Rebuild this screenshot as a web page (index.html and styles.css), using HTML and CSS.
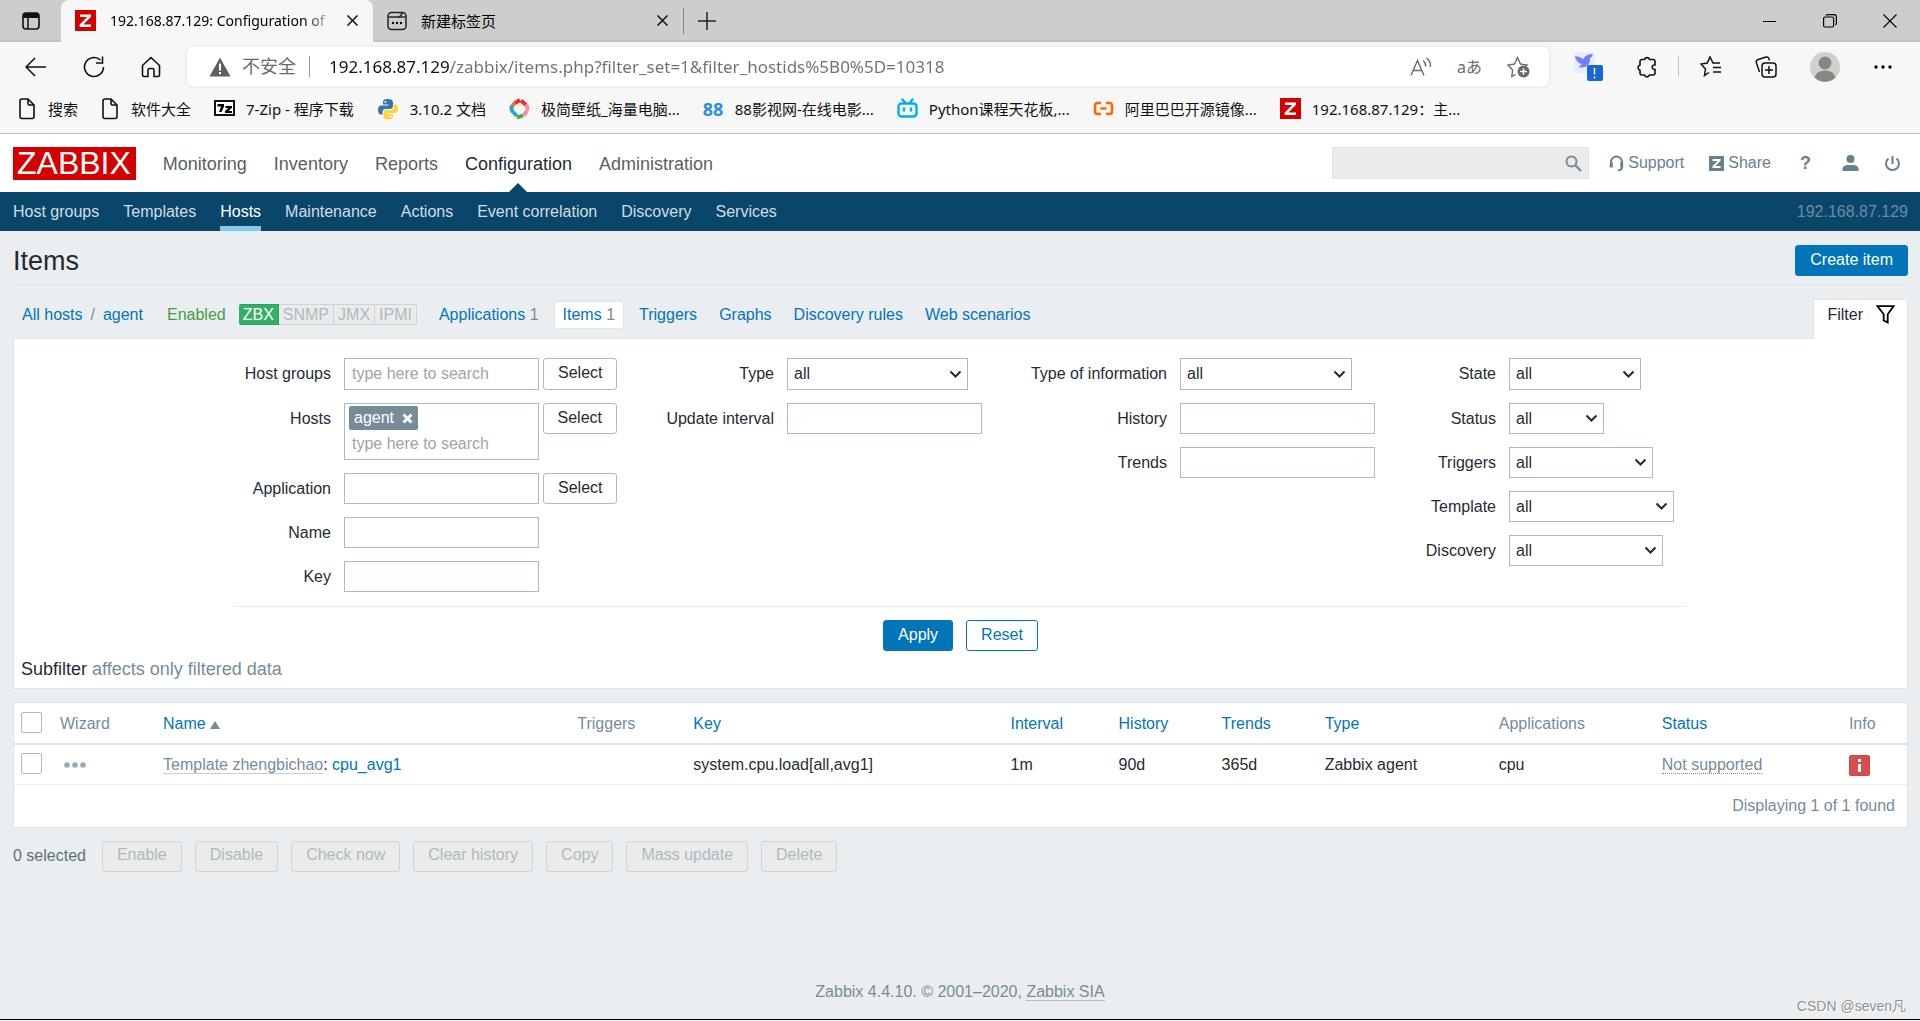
FILE: index.html
```html
<!DOCTYPE html>
<html lang="en">
<head>
<meta charset="utf-8">
<meta name="viewport" content="width=device-width, initial-scale=1">
<title>192.168.87.129: Configuration of items</title>
<link rel="stylesheet" href="styles.css">
</head>
<body>
<header class="browser">
  <div class="tabstrip">
    <button class="tab-actions" aria-label="Tab actions"><svg width="18" height="18" viewBox="0 0 18 18"><rect x="1" y="1" width="16" height="16" rx="3" fill="none" stroke="#111" stroke-width="1.6"/><path d="M1 4a3 3 0 0 1 3-3h10a3 3 0 0 1 3 3v2H1z" fill="#111"/><path d="M6 5v12" stroke="#111" stroke-width="1.5"/></svg></button>
    <div class="tab tab-active">
      <svg width="21" height="21" viewBox="0 0 21 21"><rect width="21" height="21" fill="#d40000"/><path d="M5 4.500h11v2.300l-7.600 7.700H16V17H4.700v-2.400l7.500-7.600H5z" fill="#fff"/></svg>
      <span class="tab-title">192.168.87.129: Configuration of</span>
      <button class="tab-close" aria-label="Close tab"><svg width="11" height="11" viewBox="0 0 11 11"><path d="M.5.500l10 10M10.500.500l-10 10" stroke="#111" stroke-width="1.500"/></svg></button>
    </div>
    <div class="tab tab-idle">
      <svg width="20" height="20" viewBox="0 0 20 20"><rect x="1" y="1.500" width="18" height="17" rx="3.500" fill="none" stroke="#222" stroke-width="1.500"/><path d="M1.500 6h11l3-4" fill="none" stroke="#222" stroke-width="1.400"/><path d="M12 6h6.500" stroke="#222" stroke-width="1.400"/><circle cx="6" cy="12" r="1.200"/><circle cx="10" cy="12" r="1.200"/><circle cx="14" cy="12" r="1.200"/></svg>
      <span class="tab-title">新建标签页</span>
      <button class="tab-close" aria-label="Close tab"><svg width="11" height="11" viewBox="0 0 11 11"><path d="M.5.500l10 10M10.500.500l-10 10" stroke="#111" stroke-width="1.500"/></svg></button>
    </div>
    <button class="new-tab" aria-label="New tab"><svg width="18" height="18" viewBox="0 0 18 18"><path d="M9 0v18M0 9h18" stroke="#222" stroke-width="1.500"/></svg></button>
    <div class="window-controls">
      <button aria-label="Minimize"><svg width="14" height="14" viewBox="0 0 14 14"><path d="M0 7.500h13" stroke="#000"/></svg></button>
      <button aria-label="Restore"><svg width="14" height="14" viewBox="0 0 14 14" fill="none" stroke="#000" stroke-width="1.200"><rect x=".6" y="3" width="10" height="10" rx="1.500"/><path d="M3 1.500Q3.500.600 5 .600h6Q13.400.600 13.400 3v6q0 1.500-1 2"/></svg></button>
      <button aria-label="Close"><svg width="14" height="14" viewBox="0 0 14 14"><path d="M.5.500l13 13M13.500.500l-13 13" stroke="#000" stroke-width="1.100"/></svg></button>
    </div>
  </div>
  <div class="toolbar">
    <div class="nav-buttons">
      <button aria-label="Back"><svg width="22" height="20" viewBox="0 0 22 20" fill="none" stroke="#111" stroke-width="1.500"><path d="M21 10H1M10 1l-9 9 9 9"/></svg></button>
      <button aria-label="Refresh"><svg width="22" height="22" viewBox="0 0 22 22" fill="none" stroke="#111" stroke-width="1.600"><path d="M20.500 11a9.500 9.500 0 1 1-3.200-7.100M19.500.500V7h-6.500"/></svg></button>
      <button aria-label="Home"><svg width="20" height="22" viewBox="0 0 20 22" fill="none" stroke="#111" stroke-width="1.600"><path d="M1.500 9.500L10 1.500l8.500 8V19a1.500 1.500 0 0 1-1.500 1.500h-4V14a1.500 1.500 0 0 0-1.500-1.500h-3A1.500 1.500 0 0 0 7 14v6.500H3A1.500 1.500 0 0 1 1.500 19z"/></svg></button>
    </div>
    <div class="address">
      <svg width="22" height="20" viewBox="0 0 22 20"><path d="M11 .500L21.500 19.500H.5z" fill="#5f5f5f"/><path d="M11 6.500v7M11 15v2.200" stroke="#fff" stroke-width="2"/></svg>
      <label class="insecure" for="url">不安全</label>
      <input id="url" class="url" type="text" value="192.168.87.129/zabbix/items.php?filter_set=1&amp;filter_hostids%5B0%5D=10318">
      <button aria-label="Read aloud"><svg width="22" height="20" viewBox="0 0 22 20" fill="none" stroke="#6b6b6b" stroke-width="1.400"><path d="M1 18.500L7.500 3.500 14 18.500M3.300 13.500h8.400M13 3.500q3 2.500 2.800 6M16.500 1q4.500 3.500 4 9"/></svg></button>
      <button class="translate" aria-label="Translate">aあ</button>
      <button aria-label="Add to favorites"><svg width="23" height="22" viewBox="0 0 23 22"><path d="M8.500 18.500l-3.700 2 .8-6.500L1 9l6.500-1L10.500 1.500l3 6.500 6.500 1-2 2" fill="none" stroke="#6b6b6b" stroke-width="1.400"/><circle cx="16.500" cy="15.500" r="6" fill="#6b6b6b"/><path d="M16.500 12.200v6.600M13.200 15.500h6.600" stroke="#fff" stroke-width="1.400"/></svg></button>
    </div>
    <div class="tools">
      <button aria-label="Bird extension"><svg width="29" height="29" viewBox="0 0 29 29"><rect x="0" y="0" width="21" height="21" rx="3" fill="#e9edff"/><path d="M1 4q5 .500 8 3 3-5 10-5-1 3-3 4 .500 9-8 9.500l-4-.500q3-1 3.500-3Q2 10.500 1 4z" fill="#6f80f7"/><rect x="13" y="13" width="16" height="16" rx="2" fill="#1967d2"/><path d="M20.500 16v6.500M20.500 24.500v2" stroke="#fff" stroke-width="1.500"/></svg></button>
      <button aria-label="Extensions"><svg width="21" height="22" viewBox="0 0 21 22" fill="none" stroke="#111" stroke-width="1.600"><path d="M6 3.500h2.500a2.600 2.600 0 0 1 5 0H17a2 2 0 0 1 2 2V9h-1a2.300 2.300 0 0 0 0 4.500h1V17a2 2 0 0 1-2 2h-3.500a2.600 2.600 0 0 1-5 0H6a2 2 0 0 1-2-2v-2.800a2.700 2.700 0 0 1 0-5.200V5.500a2 2 0 0 1 2-2z"/></svg></button>
      <span class="tool-sep"></span>
      <button aria-label="Favorites"><svg width="22" height="21" viewBox="0 0 22 21" fill="none" stroke="#111" stroke-width="1.500"><path d="M9 16.500L4.500 19.500 5.500 13 1 8l6.300-1L10 1l3 6h7M13 11.500h8M13 16h8"/></svg></button>
      <button aria-label="Collections"><svg width="22" height="22" viewBox="0 0 22 22" fill="none" stroke="#111" stroke-width="1.500"><rect x="7" y="7" width="14" height="14" rx="3"/><path d="M14 10v8M10 14h8M4.500 16L1.300 6.500Q.8 4.500 2.600 3.700L11 1q2-.500 2.700 1.200L14.500 4.500"/></svg></button>
      <button aria-label="Profile"><svg width="30" height="30" viewBox="0 0 30 30"><circle cx="15" cy="15" r="15" fill="#d2d0cd"/><circle cx="15" cy="11" r="6.500" fill="#8a8683"/><path d="M4.500 25.500q2-7 10.500-7t10.500 7A15 15 0 0 1 4.500 25.500z" fill="#8a8683"/></svg></button>
      <button aria-label="Settings and more"><svg width="20" height="6" viewBox="0 0 20 6"><circle cx="3" cy="3" r="1.700"/><circle cx="10" cy="3" r="1.700"/><circle cx="17" cy="3" r="1.700"/></svg></button>
    </div>
  </div>
  <nav class="bookmarks" aria-label="Bookmarks">
    <a href="#"><svg width="19" height="22" viewBox="0 0 19 22" fill="none" stroke="#111" stroke-width="1.600"><path d="M4 1h6l6 6v11.500a2 2 0 0 1-2 2H4a2 2 0 0 1-2-2V3a2 2 0 0 1 2-2zM10 1v4.500A1.500 1.500 0 0 0 11.500 7H16"/></svg>搜索</a>
    <a href="#"><svg width="19" height="22" viewBox="0 0 19 22" fill="none" stroke="#111" stroke-width="1.600"><path d="M4 1h6l6 6v11.500a2 2 0 0 1-2 2H4a2 2 0 0 1-2-2V3a2 2 0 0 1 2-2zM10 1v4.500A1.500 1.500 0 0 0 11.500 7H16"/></svg>软件大全</a>
    <a href="#"><svg width="21" height="21" viewBox="0 0 21 21"><rect x="1" y="3" width="19" height="14" fill="#fff" stroke="#111" stroke-width="2"/><path d="M3.500 6h6.500v2.500L7.500 14H5l2-5.500H3.500zM11.500 8H18v1.800L14.500 13H18v2h-7v-2l3.300-3h-2.800z"/></svg>7-Zip - 程序下载</a>
    <a href="#"><svg width="22" height="22" viewBox="0 0 22 22"><path d="M11 1C7 1 6 2.500 6 4.500V6.500h5.500v1H4C2 7.500 1 9.500 1 12s1 4.500 3 4.500h1.500V14c0-2 1.500-3 3-3H13c1.800 0 3-1.200 3-3V4.500C16 2 14 1 11 1z" fill="#3775a9"/><path d="M11 21.500c4 0 5-1.500 5-3.500v-2h-5.500v-1H18c2 0 3-2 3-4.500S20 6.500 18 6.500h-1V9c0 2-1.500 3-3 3H9.500c-1.800 0-3 1.200-3 3v3c0 2.500 1.500 3.500 4.500 3.500z" fill="#ffd43b"/><circle cx="8.500" cy="4" r="1" fill="#fff"/><circle cx="13.500" cy="18.500" r="1" fill="#fff"/></svg>3.10.2 文档</a>
    <a href="#"><svg width="21" height="22" viewBox="0 0 21 22" fill="none" stroke-width="3.800"><path d="M2.500 9L6 4.500" stroke="#ee7724"/><path d="M6 5l5-3" stroke="#e62f2f"/><path d="M12 2.500l5 4.500" stroke="#e62f2f"/><path d="M17.500 6.500l1.500 6" stroke="#f58aa0"/><path d="M18.500 12.500l-4 5" stroke="#f58aa0"/><path d="M14 17.500l-6 2" stroke="#55a630"/><path d="M8 18l-4-4" stroke="#20a7d8"/><path d="M3.500 14.500L2 8" stroke="#20a7d8"/></svg>极简壁纸_海量电脑...</a>
    <a href="#"><b class="mark-88">88</b>88影视网-在线电影...</a>
    <a href="#"><svg width="21" height="21" viewBox="0 0 21 21" fill="none" stroke="#00aeec" stroke-width="2.400" stroke-linecap="round"><rect x="1.500" y="5.500" width="18" height="13" rx="3"/><path d="M5.500 1.500l2.500 3M15.500 1.500l-2.500 3M7 10.500v2M14 10.500v2"/></svg>Python课程天花板,...</a>
    <a href="#"><svg width="21" height="21" viewBox="0 0 21 21" fill="none" stroke="#ff6a00" stroke-width="2.600"><path d="M8 5H4.500Q2 5 2 7.500v6Q2 16 4.500 16H8M13 5h3.500Q19 5 19 7.500v6Q19 16 16.500 16H13M7.500 10.500h6"/></svg>阿里巴巴开源镜像...</a>
    <a href="#"><svg width="21" height="21" viewBox="0 0 21 21"><rect width="21" height="21" fill="#d40000"/><path d="M5 4.500h11v2.300l-7.600 7.700H16V17H4.700v-2.400l7.500-7.600H5z" fill="#fff"/></svg>192.168.87.129：主...</a>
  </nav>
</header>

<header class="top">
  <a class="logo" href="#">ZABBIX</a>
  <nav class="main-nav" aria-label="Main">
    <a href="#">Monitoring</a>
    <a href="#">Inventory</a>
    <a href="#">Reports</a>
    <a href="#" class="selected">Configuration</a>
    <a href="#">Administration</a>
  </nav>
  <form class="search">
    <input type="text" aria-label="Search">
    <button type="button" aria-label="Search"><svg width="17" height="17" viewBox="0 0 17 17" fill="none" stroke="#768d99"><circle cx="6.500" cy="6.500" r="5" stroke-width="2"/><path d="M10.500 10.500l5.500 5.500" stroke-width="2.400"/></svg></button>
  </form>
  <div class="user-nav">
    <a href="#"><svg width="15" height="17" viewBox="0 0 15 17" fill="none" stroke="#69808d" stroke-width="2"><path d="M2 11V7a5.500 5.500 0 0 1 11 0v5q0 3-4 3.500"/><path d="M2.300 7.500v5M12.700 7.500v5" stroke-width="3"/></svg>Support</a>
    <a href="#"><svg width="15" height="15" viewBox="0 0 15 15"><rect width="15" height="15" fill="#69808d"/><path d="M3.500 3h8v1.800L6.500 10H11.500v2h-8v-1.800l5-5.200h-5z" fill="#fff"/></svg>Share</a>
    <a href="#" class="help" aria-label="Help">?</a>
    <a href="#" aria-label="User profile"><svg width="17" height="16" viewBox="0 0 17 16" fill="#69808d"><circle cx="8.500" cy="4" r="4"/><path d="M.5 16v-2.500Q1 10 6 10h5q5 0 5.500 3.500V16z"/></svg></a>
    <a href="#" aria-label="Sign out"><svg width="17" height="17" viewBox="0 0 17 17" fill="none" stroke="#69808d" stroke-width="2"><path d="M4.500 3.500a6.500 6.500 0 1 0 8 0M8.500 1v8"/></svg></a>
  </div>
</header>
<nav class="sub-nav" aria-label="Configuration">
  <a href="#">Host groups</a>
  <a href="#">Templates</a>
  <a href="#" class="selected">Hosts</a>
  <a href="#">Maintenance</a>
  <a href="#">Actions</a>
  <a href="#">Event correlation</a>
  <a href="#">Discovery</a>
  <a href="#">Services</a>
  <span class="server-name">192.168.87.129</span>
</nav>

<main>
  <div class="title-row">
    <h1>Items</h1>
    <button class="btn primary">Create item</button>
  </div>

  <div class="object-row">
    <nav class="crumbs" aria-label="Host">
      <a href="#">All hosts</a><span class="slash">/</span><a href="#">agent</a>
      <span class="enabled">Enabled</span>
      <span class="availability"><span class="on">ZBX</span><span>SNMP</span><span>JMX</span><span>IPMI</span></span>
      <span class="object"><a href="#">Applications</a> 1</span>
      <span class="object current"><a href="#">Items</a> 1</span>
      <a class="object" href="#">Triggers</a>
      <a class="object" href="#">Graphs</a>
      <a class="object" href="#">Discovery rules</a>
      <a class="object" href="#">Web scenarios</a>
    </nav>
    <a class="filter-tab" href="#">Filter<svg width="19" height="19" viewBox="0 0 19 19" fill="none" stroke="#000" stroke-width="1.800"><path d="M1.500 1.200h16l-5.800 8v8.300l-4-2V9.200z"/></svg></a>
  </div>

  <form class="panel filter">
    <div class="filter-body">
      <div class="fields fields-host">
        <label for="groups">Host groups</label><div class="field"><input id="groups" type="text" placeholder="type here to search"><button type="button" class="btn plain">Select</button></div>
        <label for="hosts">Hosts</label><div class="field"><div class="multiselect"><span class="tag">agent<button type="button" aria-label="Remove agent"><svg width="11" height="11" viewBox="0 0 11 11"><path d="M1.500 1.500l8 8M9.500 1.500l-8 8" stroke="#fff" stroke-width="3"/></svg></button></span><input id="hosts" type="text" placeholder="type here to search"></div><button type="button" class="btn plain">Select</button></div>
        <label for="app">Application</label><div class="field"><input id="app" type="text"><button type="button" class="btn plain">Select</button></div>
        <label for="name">Name</label><div class="field"><input id="name" type="text"></div>
        <label for="key">Key</label><div class="field"><input id="key" type="text"></div>
      </div>
      <div class="fields fields-type">
        <label for="type">Type</label><div class="field"><select id="type" class="w-type"><option>all</option></select></div>
        <label for="interval">Update interval</label><div class="field"><input id="interval" type="text"></div>
      </div>
      <div class="fields fields-info">
        <label for="info">Type of information</label><div class="field"><select id="info" class="w-info"><option>all</option></select></div>
        <label for="history">History</label><div class="field"><input id="history" type="text"></div>
        <label for="trends">Trends</label><div class="field"><input id="trends" type="text"></div>
      </div>
      <div class="fields fields-state">
        <label for="state">State</label><div class="field"><select id="state" class="w-state"><option>all</option></select></div>
        <label for="status">Status</label><div class="field"><select id="status" class="w-status"><option>all</option></select></div>
        <label for="triggers">Triggers</label><div class="field"><select id="triggers" class="w-triggers"><option>all</option></select></div>
        <label for="template">Template</label><div class="field"><select id="template" class="w-template"><option>all</option></select></div>
        <label for="discovery">Discovery</label><div class="field"><select id="discovery" class="w-discovery"><option>all</option></select></div>
      </div>
    </div>
    <div class="filter-actions">
      <button type="button" class="btn primary">Apply</button>
      <button type="button" class="btn outline">Reset</button>
    </div>
    <p class="subfilter">Subfilter <span>affects only filtered data</span></p>
  </form>

  <div class="panel list">
    <table>
      <colgroup><col class="c-check"><col class="c-wizard"><col class="c-name"><col class="c-trig"><col class="c-key"><col class="c-interval"><col class="c-short"><col class="c-short"><col class="c-type"><col class="c-apps"><col class="c-status"><col class="c-info"></colgroup>
      <thead>
        <tr><th><input type="checkbox" aria-label="Select all"></th><th>Wizard</th><th><a href="#">Name<span class="sort"></span></a></th><th>Triggers</th><th><a href="#">Key</a></th><th><a href="#">Interval</a></th><th><a href="#">History</a></th><th><a href="#">Trends</a></th><th><a href="#">Type</a></th><th>Applications</th><th><a href="#">Status</a></th><th>Info</th></tr>
      </thead>
      <tbody>
        <tr><td><input type="checkbox" aria-label="Select cpu_avg1"></td><td><button class="wizard" aria-label="Item menu"><svg width="22" height="6" viewBox="0 0 22 6" fill="#97aab3"><circle cx="3" cy="3" r="2.800"/><circle cx="11" cy="3" r="2.800"/><circle cx="19" cy="3" r="2.800"/></svg></button></td><td><a class="origin" href="#">Template zhengbichao</a>: <a href="#">cpu_avg1</a></td><td></td><td>system.cpu.load[all,avg1]</td><td>1m</td><td>90d</td><td>365d</td><td>Zabbix agent</td><td>cpu</td><td><a class="unsupported" href="#">Not supported</a></td><td><span class="info-icon"><svg width="19" height="19" viewBox="0 0 19 19"><path d="M9.500 3v3M9.500 8v8" stroke="#fff" stroke-width="3"/></svg></span></td></tr>
      </tbody>
    </table>
    <p class="found">Displaying 1 of 1 found</p>
  </div>

  <div class="bulk">
    <span>0 selected</span>
    <button class="btn" disabled>Enable</button>
    <button class="btn" disabled>Disable</button>
    <button class="btn" disabled>Check now</button>
    <button class="btn" disabled>Clear history</button>
    <button class="btn" disabled>Copy</button>
    <button class="btn" disabled>Mass update</button>
    <button class="btn" disabled>Delete</button>
  </div>
</main>

<footer>Zabbix 4.4.10. © 2001–2020, <a href="#">Zabbix SIA</a><span class="credit">CSDN @seven凡</span></footer>
</body>
</html>
```
FILE: styles.css
```css
* { box-sizing: border-box; }

body {
  margin: 0;
  min-height: 100vh;
  padding-bottom: 1px;
  display: flex;
  flex-direction: column;
  background: #ebeef0;
  color: #1f2c33;
  font: 16px/20px "Liberation Sans", Arial, sans-serif;
}

a { color: #0275b8; text-decoration: none; }
p, h1 { margin: 0; font-weight: normal; }
svg { display: block; flex: none; }
button { margin: 0; padding: 0; border: 0; background: none; font: inherit; color: inherit; }
input, select { font: inherit; color: inherit; margin: 0; }

/* Browser window */
.browser {
  background: #f7f7f7;
  border-bottom: 1px solid #c0c0c0;
  color: #000;
  font: 16px/22px "Noto Sans", "Noto Sans CJK SC", sans-serif;
}

.tabstrip {
  display: flex;
  height: 42px;
  background: #cdcdcd;
  box-shadow: inset 0 -2px 0 #c3c3c3;
}
.tab-actions { width: 61px; display: grid; place-items: center; }
.tab { display: flex; align-items: center; gap: 14px; width: 312px; padding: 0 14px 1px; }
.tab-active { background: #f7f7f7; border-radius: 8px 8px 0 0; }
.tab-idle { border-right: 1px solid #858585; width: 311px; margin: 8px 0; }
.tab-title { flex: 1; white-space: nowrap; font-size: 15px; }
.tab-active .tab-title { font-size: 14px; mask-image: linear-gradient(90deg, #000 88%, transparent 102%); }
.tab-close { width: 14px; height: 14px; display: grid; place-items: center; }
.new-tab { width: 46px; display: grid; place-items: center; }
.window-controls { margin-left: auto; display: flex; }
.window-controls button { width: 60px; display: grid; place-items: center; }

.toolbar { display: flex; align-items: center; padding: 5px 27px 0 25px; }
.nav-buttons { display: flex; align-items: center; gap: 36px; width: 162px; }
.address {
  flex: 1;
  display: flex;
  align-items: center;
  height: 39px;
  padding: 0 19px 0 22px;
  background: #fff;
  border-radius: 6px;
  box-shadow: 0 0 4px #e2e2e2;
}
.insecure { margin-left: 11px; padding-right: 13px; border-right: 1px solid #999; font-size: 18px; color: #6b6b6b; line-height: 21px; }
.url {
  flex: 1;
  min-width: 0;
  margin-left: 19px;
  padding: 0;
  border: 0;
  font-size: 17px;
  color: transparent;
  background: linear-gradient(90deg, #111 122px, #707070 122px);
  background-clip: text;
}
.address button { margin-left: 25px; }
.address .translate { font-size: 16px; color: #6b6b6b; }
.tools { display: flex; align-items: center; gap: 33px; margin-left: 25px; }
.tool-sep { width: 1px; height: 21px; margin: 0 -12px; background: #c4c4c4; }

.bookmarks { display: flex; align-items: center; gap: 23px; height: 47px; padding: 0 18px 2px; }
.bookmarks a { display: flex; align-items: center; gap: 11px; color: #111; font-size: 15px; white-space: nowrap; }
.mark-88 { width: 21px; color: #2a8fe0; font-size: 18px; }

/* Application header */
.top { display: flex; align-items: center; height: 58px; padding: 0 19px 0 13px; background: #fff; }
.logo { padding: 0 5px 0 4px; background: #d40000; color: #fff; font-size: 32px; line-height: 33px; }
.main-nav { display: flex; gap: 27px; margin-left: 27px; font-size: 18px; align-self: stretch; }
.main-nav a { display: flex; align-items: center; padding-top: 2px; color: #5a5f62; }
.main-nav .selected { position: relative; color: #1f2c33; }
.main-nav .selected::after {
  content: "";
  position: absolute;
  left: 50%;
  bottom: 0;
  margin-left: -9px;
  border: 9px solid transparent;
  border-top: 0;
  border-bottom-color: #0a466a;
}
.search { display: flex; align-items: center; width: 257px; height: 32px; margin-left: auto; padding-right: 6px; background: #ebebeb; border: 1px solid #dfe4e7; }
.search input { flex: 1; min-width: 0; height: 30px; border: 0; background: none; }
.user-nav { display: flex; align-items: center; gap: 25px; margin-left: 20px; }
.user-nav a { display: flex; align-items: center; gap: 4px; color: #69808d; }
.user-nav .help { margin: 0 6px 0 4px; font-size: 18px; font-weight: bold; }

.sub-nav { display: flex; gap: 24px; height: 39px; padding: 0 12px 0 13px; background: #0a466a; }
.sub-nav a { padding-top: 10px; color: #d2dde3; }
.sub-nav .selected { color: #fff; border-bottom: 5px solid #85c8f3; }
.server-name { margin-left: auto; padding-top: 10px; color: #6a8ca4; }

/* Page content */
main { padding: 0 12px 0 13px; }

.title-row { display: flex; align-items: center; justify-content: space-between; height: 55px; padding-top: 5px; border-bottom: 1px solid #dfe4e7; }
h1 { font-size: 27px; line-height: 32px; }

.btn { height: 31px; padding: 0 14px 2px; border: 1px solid #acbbc2; border-radius: 3px; white-space: nowrap; }
.btn.primary { background: #0275b8; border-color: #0275b8; color: #fff; }
.btn.outline { background: #fff; border-color: #0275b8; color: #0275b8; }
.btn.plain { background: #fff; }
.btn:disabled { background: #ebebeb; border-color: #ccd5d9; color: #acbbc2; }

.object-row { display: flex; justify-content: space-between; height: 52px; }
.crumbs { display: flex; align-items: center; padding: 5px 0 0 9px; }
.slash { margin: 0 8px; color: #768d99; }
.enabled { margin: 0 13px 0 24px; color: #429e47; }
.availability { display: flex; margin-right: 13px; color: #acbbc2; line-height: 19px; }
.availability span { padding: 0 4px; background: #ebebeb; border: 1px solid #ccd5d9; border-left-width: 0; }
.availability span:last-child { border-radius: 0 2px 2px 0; }
.availability .on { background: #34af67; border-color: #2f9f5e; color: #fff; border-radius: 2px 0 0 2px; }
.object { padding: 3px 8px; margin-right: 6px; border: 1px solid transparent; border-radius: 3px; color: #768d99; }
a.object { color: #0275b8; margin-right: 4px; }
.current { background: #fff; border-color: #dfe4e7; }
.filter-tab {
  display: flex;
  gap: 13px;
  height: 40px;
  margin-top: 13px;
  padding: 5px 12px 0 13px;
  background: #fff;
  border: 1px solid #dfe4e7;
  border-bottom: 0;
  border-radius: 3px 3px 0 0;
  color: #1f2c33;
  position: relative;
}

.panel { background: #fff; border: 1px solid #dfe4e7; }
.filter-body { display: flex; justify-content: center; gap: 40px; width: fit-content; margin: 0 auto; padding: 19px 0 14px; border-bottom: 1px solid #e9ecee; }
.fields { display: grid; align-content: start; column-gap: 13px; row-gap: 13px; }
.fields-host { grid-template-columns: 97px 273px; }
.fields-type { grid-template-columns: 117px 195px; }
.fields-info { grid-template-columns: 145px 195px; }
.fields-state { grid-template-columns: 81px 178px; }
.fields label { padding-top: 6px; text-align: right; white-space: nowrap; }
.field { display: flex; align-items: flex-start; gap: 4px; }
.field > input, .field > select { height: 31px; border: 1px solid #acbbc2; border-radius: 0; background: #fff; }
.field > input { width: 195px; padding: 0 7px; }
.field > select {
  appearance: none;
  padding: 0 6px;
  background: #fff url("data:image/svg+xml,%3Csvg xmlns='http://www.w3.org/2000/svg' width='13' height='9' viewBox='0 0 13 9'%3E%3Cpath d='M1.500 1.500l5 5 5-5' fill='none' stroke='%231f2c33' stroke-width='2'/%3E%3C/svg%3E") no-repeat right 5px center;
}
.field ::placeholder { color: #9da5a9; opacity: 1; }
.fields > .field:nth-child(2) > * { height: 32px; }
.multiselect { width: 195px; height: 57px; padding: 2px 4px; border: 1px solid #acbbc2; }
.multiselect input { width: 100%; height: 28px; padding: 0 3px; border: 0; background: none; }
.tag { display: flex; align-items: center; gap: 8px; width: fit-content; height: 24px; padding: 0 5px; border-radius: 2px; background: #768d99; color: #fff; }
.w-type { width: 181px; }
.w-info { width: 172px; }
.w-state { width: 132px; }
.w-status { width: 95px; }
.w-triggers { width: 144px; }
.w-template { width: 165px; }
.w-discovery { width: 154px; }
.filter-actions { display: flex; justify-content: center; gap: 13px; padding-top: 13px; }
.subfilter { padding: 8px 7px 9px; font-size: 18px; }
.subfilter span { color: #768d99; }

.list { margin-top: 13px; }
table { width: 100%; table-layout: fixed; border-collapse: collapse; }
th, td { height: 40px; padding: 2px 7px 0; text-align: left; font-weight: normal; white-space: nowrap; }
th { height: 41px; color: #768d99; border-bottom: 2px solid #dfe4e7; }
td { border-bottom: 1px solid #ebeef0; }
.c-check { width: 39px; }
.c-wizard { width: 103px; }
.c-name { width: 414px; }
.c-trig { width: 116px; }
.c-key { width: 317px; }
.c-interval { width: 108px; }
.c-short { width: 103px; }
.c-type { width: 174px; }
.c-apps { width: 163px; }
.c-status { width: 187px; }
.c-info { width: 65px; }
input[type="checkbox"] { appearance: none; display: block; width: 21px; height: 21px; margin-bottom: 4px; border: 1px solid #acbbc2; border-radius: 2px; background: #fff; }
.sort { display: inline-block; margin-left: 4px; border: 5px solid transparent; border-top: 0; border-bottom: 8px solid #768d99; }
.wizard { display: block; padding: 4px; }
.origin { color: #768d99; border-bottom: 1px solid #c3ced3; }
.unsupported { color: #768d99; border-bottom: 1px dotted #768d99; }
.info-icon { display: grid; place-items: center; width: 21px; height: 21px; border: 1px solid #c94848; border-radius: 2px; background: #d64e4e; }
.found { padding: 11px 12px; color: #768d99; text-align: right; }

.bulk { display: flex; align-items: center; gap: 13px; margin-top: 13px; color: #5c717c; }
.bulk span { margin-right: 3px; }

footer { position: relative; margin-top: auto; padding: 0 13px 17px; border-bottom: 1px solid #000; color: #768d99; text-align: center; }
footer a { color: #768d99; border-bottom: 1px solid #b5c1c7; }
.credit { position: absolute; right: 14px; bottom: 3px; font: 14px/20px "Liberation Sans", "Noto Sans CJK SC", sans-serif; color: #8f9294; text-shadow: 1px 1px 0 #fff; }
```
